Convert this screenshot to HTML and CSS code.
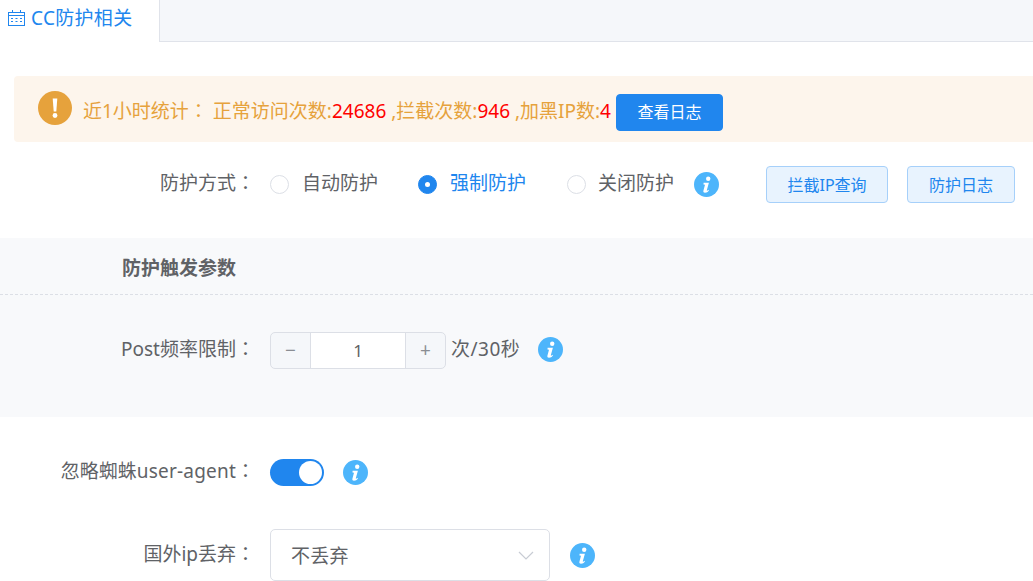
FILE: index.html
```html
<!DOCTYPE html>
<html lang="zh-CN">
<head>
<meta charset="utf-8">
<title>CC防护相关</title>
<link rel="stylesheet" href="styles.css">
</head>
<body>
<svg class="defs" width="0" height="0" aria-hidden="true">
  <symbol id="info" viewBox="0 0 25 25">
    <circle cx="12.5" cy="12.5" r="12.5" fill="#4db5fb"/>
    <circle cx="14.200" cy="6.800" r="2.200" fill="#fff"/>
    <path d="M9.600 10.800h5.300l-2.100 7.500c-.1.500.3.600.7.300l1-.8.400.6c-1 1.300-2.300 2.300-3.900 2.300-1.300 0-1.900-.8-1.600-2l1.600-6-1.500-.3z" fill="#fff"/>
  </symbol>
</svg>
<div class="tabs">
  <div class="tab">
    <svg class="cal" width="17" height="16" viewBox="0 0 17 16" fill="none" stroke="#2086ee" stroke-width="1">
      <rect x="0.500" y="2.500" width="16" height="13"/>
      <path d="M0.500 5.500h16M4.500 0v2.500M12.500 0v2.500"/>
      <path d="M3 8.500h2M7.500 8.500h2M12 8.500h2M3 11.500h2M7.500 11.500h2M12 11.500h2" stroke-width="1.200"/>
    </svg>
    <span class="tab-text">CC防护相关</span>
  </div>
  <div class="tab-rest"></div>
</div>

<div class="alert">
  <svg class="alert-icon" width="34" height="34" viewBox="0 0 34 34">
    <circle cx="17" cy="17" r="17" fill="#e6a23c"/>
    <path d="M14.700 7.500h4.600l-1 13h-2.600z" fill="#fff"/>
    <circle cx="17" cy="24.500" r="2.400" fill="#fff"/>
  </svg>
  <span class="alert-text">近1小时统计<span class="colon" lang="zh-TW">：</span> 正常访问次数:<b>24686</b> ,拦截次数:<b>946</b> ,加黑IP数:<b>4</b></span>
  <button class="btn btn-primary">查看日志</button>
</div>

<div class="row row-mode">
  <label class="label">防护方式<span class="colon" lang="zh-TW">：</span></label>
  <span class="radio"><i class="dot"></i><span class="txt">自动防护</span></span>
  <span class="radio on"><i class="dot"></i><span class="txt">强制防护</span></span>
  <span class="radio last"><i class="dot"></i><span class="txt">关闭防护</span></span>
  <svg class="info info-mode"><use href="#info"/></svg>
  <button class="btn btn-plain first">拦截IP查询</button>
  <button class="btn btn-plain second">防护日志</button>
</div>

<section class="panel">
  <h3 class="panel-title">防护触发参数</h3>
  <div class="row row-post">
    <label class="label">Post频率限制<span class="colon" lang="zh-TW">：</span></label>
    <div class="stepper">
      <span class="step minus">−</span>
      <span class="value">1</span>
      <span class="step plus">+</span>
    </div>
    <span class="unit">次/30秒</span>
    <svg class="info info-post"><use href="#info"/></svg>
  </div>
</section>

<div class="row row-switch">
  <label class="label">忽略蜘蛛<span class="latin">user-agent</span><span class="colon" lang="zh-TW">：</span></label>
  <span class="switch"><i></i></span>
  <svg class="info info-switch"><use href="#info"/></svg>
</div>

<div class="row row-select">
  <label class="label">国外ip丢弃<span class="colon" lang="zh-TW">：</span></label>
  <div class="select">
    <span class="select-text">不丢弃</span>
    <svg width="16" height="9" viewBox="0 0 16 9" fill="none" stroke="#c8ccd4" stroke-width="1.200"><path d="M1 1l7 7 7-7"/></svg>
  </div>
  <svg class="info info-select"><use href="#info"/></svg>
</div>
</body>
</html>
```

FILE: styles.css
```css
* { box-sizing: border-box; }
html, body { height: 581px; overflow: hidden; }
body {
  margin: 0;
  background: #fff;
  color: #606266;
  font-family: "Noto Sans", "Noto Sans CJK SC", sans-serif;
  font-size: 19px;
}
.defs { display: block; height: 0; }
.colon { font-family: "Noto Sans CJK TC", sans-serif; }
.latin { letter-spacing: 0.2px; }
.tabs { display: flex; height: 42px; }
.tab {
  width: 160px;
  display: flex;
  align-items: center;
  padding: 0 0 8px 8px;
  gap: 6px;
  color: #2086ee;
  border-right: 1px solid #e0e3ea;
}
.tab-text { letter-spacing: 0.3px; }
.cal { margin-top: 1px; }
.tab-rest { flex: 1; background: #f5f7fa; border-bottom: 1px solid #e0e3ea; }

.alert {
  margin: 34px 0 0 14px;
  height: 66px;
  background: #fdf5ec;
  border-radius: 4px 0 0 4px;
  display: flex;
  align-items: center;
  padding-left: 24px;
  color: #e6a23c;
}
.alert-icon { flex: none; margin-top: -2px; margin-right: 11px; }
.alert-text { margin-top: 2px; white-space: pre; }
.alert-text b { color: #f00; font-weight: 400; }
.btn {
  font: inherit;
  font-size: 16px;
  border-radius: 4px;
  cursor: pointer;
  padding: 0 0 2px;
}
.btn-primary {
  width: 107px;
  height: 37px;
  margin: 6px 0 0 5px;
  background: #2086ee;
  border: 1px solid #2086ee;
  color: #fff;
}
.btn-plain {
  height: 37px;
  background: #e8f3fe;
  border: 1px solid #a6d0fa;
  color: #2086ee;
}

.row { display: flex; align-items: center; }
.label { width: 255px; text-align: right; flex: none; white-space: nowrap; padding-bottom: 5px; }
.info { width: 25px; height: 25px; flex: none; }

.row-mode { height: 37px; margin-top: 24px; }
.row-mode .label { margin-right: 15px; }
.radio { display: flex; align-items: center; margin-right: 40px; }
.radio.on { margin-right: 41px; }
.txt { padding-bottom: 5px; }
.dot {
  width: 19px;
  height: 19px;
  border-radius: 50%;
  border: 1px solid #dcdfe6;
  background: #fff;
  margin-right: 13px;
}
.radio.last { margin-right: 41px; }
.radio.last .dot { margin-right: 12px; }
.radio.on { color: #2086ee; }
.radio.on .dot { background: #2086ee; border-color: #2086ee; position: relative; }
.radio.on .dot::after {
  content: "";
  position: absolute;
  left: 6px;
  top: 6px;
  width: 5px;
  height: 5px;
  border-radius: 50%;
  background: #fff;
}
.info-mode { margin-left: -21px; }
.first { width: 122px; margin-left: 47px; }
.second { width: 108px; margin-left: 19px; }

.panel { margin-top: 35px; height: 179px; background: #f8f9fb; }
.panel-title {
  margin: 0;
  height: 57px;
  padding: 17px 0 0 122px;
  font-size: 19px;
  line-height: 27px;
  font-weight: 700;
  color: #606266;
  border-bottom: 1px dashed #dcdfe6;
}
.row-post { margin-top: 37px; height: 37px; }
.stepper {
  width: 176px;
  height: 37px;
  display: flex;
  margin-left: 15px;
  border: 1px solid #dcdfe6;
  border-radius: 5px;
  background: #f5f7fa;
  overflow: hidden;
}
.step { width: 39px; text-align: center; line-height: 34px; color: #8a8d93; flex: none; }
.value {
  flex: 1;
  background: #fff;
  border-left: 1px solid #dcdfe6;
  border-right: 1px solid #dcdfe6;
  text-align: center;
  line-height: 35px;
  font-size: 17px;
}
.unit { margin-left: 5px; padding-bottom: 5px; letter-spacing: 0.5px; }
.info-post { margin: 0 0 2px 18px; }

.row-switch { margin-top: 42px; height: 26px; }
.row-switch .label, .row-select .label { padding-bottom: 4px; }
.switch {
  margin-left: 15px;
  width: 54px;
  height: 27px;
  border-radius: 14px;
  background: #2086ee;
  position: relative;
}
.switch i {
  position: absolute;
  right: 2px;
  top: 2px;
  width: 23px;
  height: 23px;
  border-radius: 50%;
  background: #fff;
}
.info-switch { margin-left: 19px; }

.row-select { margin-top: 44px; height: 52px; }
.select {
  margin-left: 15px;
  width: 280px;
  height: 52px;
  border: 1px solid #dcdfe6;
  border-radius: 5px;
  background: #fff;
  display: flex;
  align-items: center;
  justify-content: space-between;
  padding: 0 15px 0 20px;
}
.select-text { padding-bottom: 1px; letter-spacing: 0.3px; }
.info-select { margin-left: 20px; }
```
